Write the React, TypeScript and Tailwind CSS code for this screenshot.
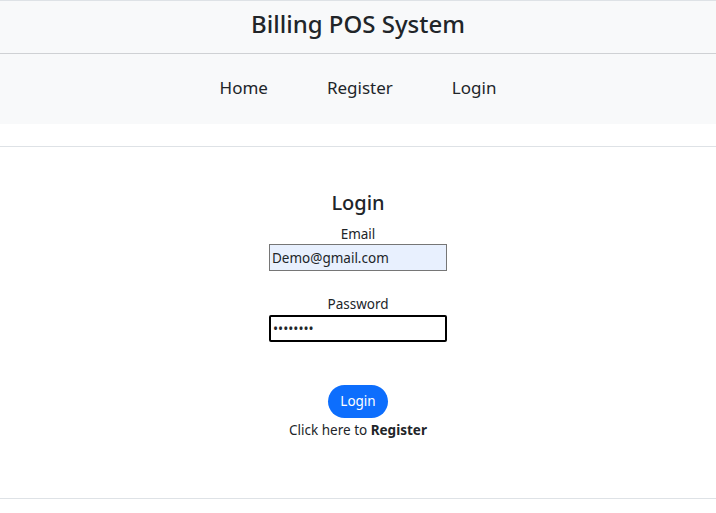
export default function App() {
  return (
    <div className="min-h-[513px] bg-white text-[#212529]" style={{ fontFamily: '"Noto Sans", "Open Sans", sans-serif' }}>
      <header className="border-t border-[#dee2e6] bg-[#f8f9fa]">
        <h1 className="flex h-[53px] items-center justify-center border-b border-[#cfd1d4] pb-[6px] text-[24px] font-medium">
          Billing POS System
        </h1>
        <nav className="flex h-[70px] items-center justify-center gap-[59px] pb-[2px] text-[17px]">
          <a className="cursor-pointer">Home</a>
          <a className="cursor-pointer">Register</a>
          <a className="cursor-pointer">Login</a>
        </nav>
      </header>

      <div className="mt-[22px] border-t border-[#dee2e6]" />

      <main className="flex h-[351px] flex-col items-center pt-[43px]">
        <h2 className="text-[20px] font-medium leading-[26px]">Login</h2>
        <label className="mt-[8px] text-[13.5px] leading-[20px]">Email</label>
        <input
          className="h-[27px] w-[178px] border border-[#767676] bg-[#e8f0fe] px-[2px] text-[13.5px] outline-none"
          defaultValue="Demo@gmail.com"
        />
        <label className="mt-[23px] text-[13.5px] leading-[20px]">Password</label>
        <input
          type="password"
          className="mt-[1px] h-[27px] w-[178px] rounded-[2px] border-2 border-black px-[2px] text-[13.5px] outline-none"
          defaultValue="12345678"
        />
        <button className="mt-[43px] h-[33px] rounded-full bg-[#0d6efd] px-[12px] text-[13.5px] text-white">
          Login
        </button>
        <p className="mt-[2px] text-[13.5px] leading-[20px]">
          Click here to <b className="font-bold">Register</b>
        </p>
      </main>

      <div className="border-t border-[#dee2e6]" />
    </div>
  );
}
